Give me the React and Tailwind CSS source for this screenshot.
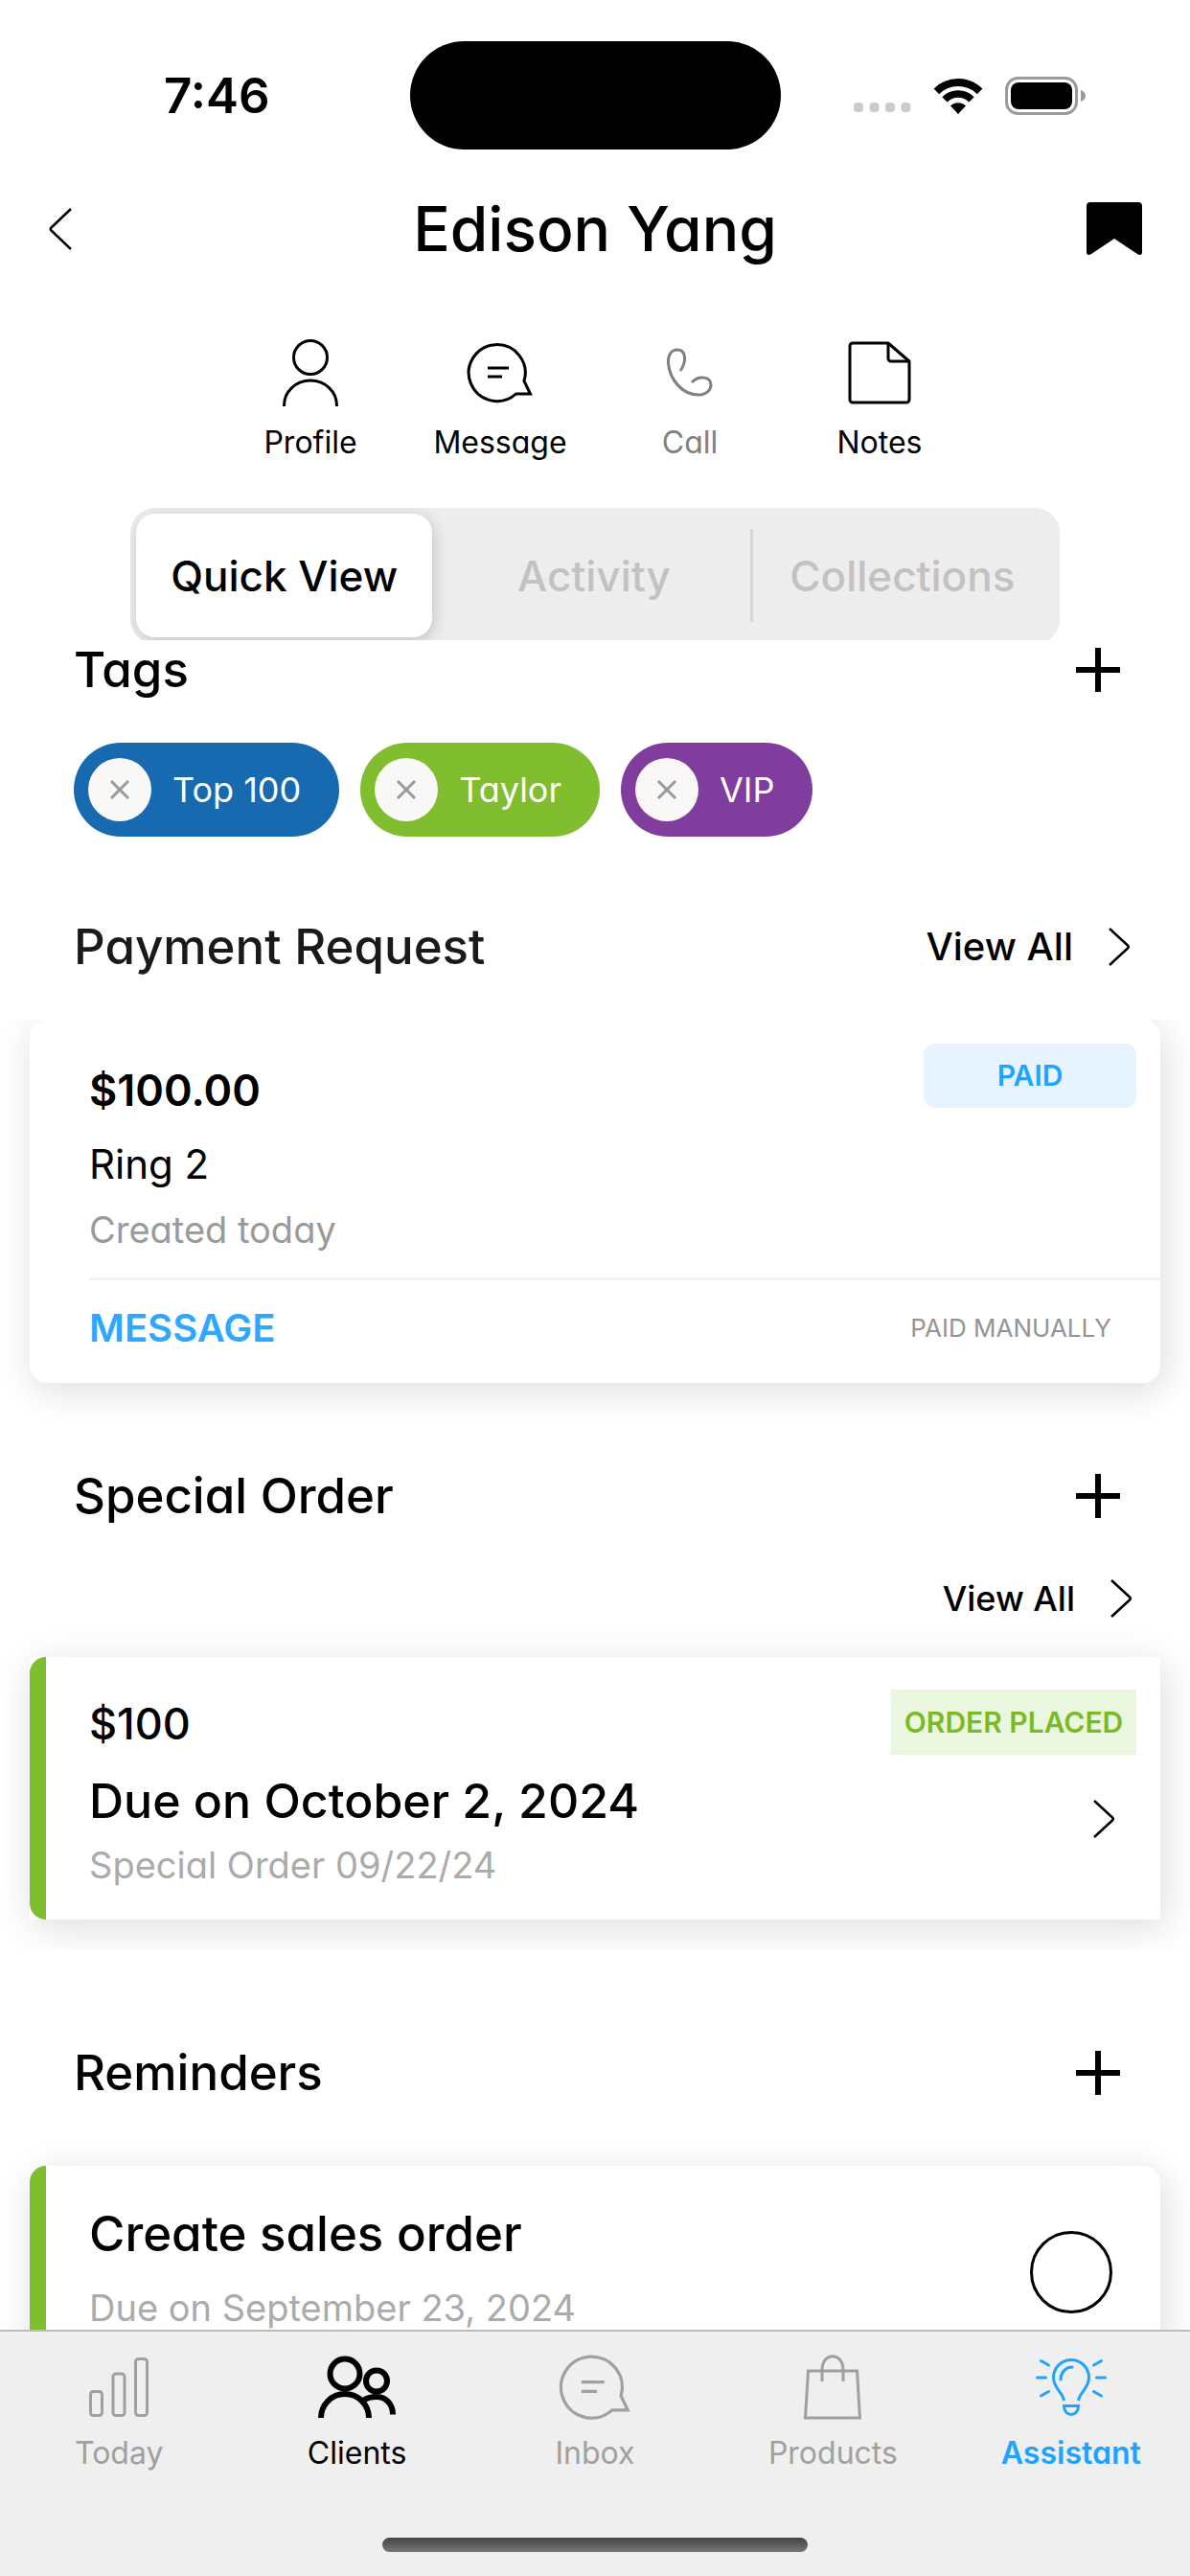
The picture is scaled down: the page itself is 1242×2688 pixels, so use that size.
import React, { useState } from 'react';
import clsx from 'clsx';

const TAGS = [
    { label: 'Top 100', color: 'bg-[#176ab0]' },
    { label: 'Taylor', color: 'bg-[#80be30]' },
    { label: 'VIP', color: 'bg-[#813d9d]' },
];

const VIEWS = ['Quick View', 'Activity', 'Collections'];

const WifiIcon = () => (
    <svg width="52" height="38" viewBox="0 0 52 38" fill="none" aria-hidden="true">
        <path d="M3.4 14.4a32 32 0 0 1 45.2 0" stroke="#000" strokeWidth="8" />
        <path d="M11.9 22.9a20 20 0 0 1 28.2 0" stroke="#000" strokeWidth="7.5" />
        <path d="M26 38l-8-8.500a11.500 11.500 0 0 1 16 0z" fill="#000" />
    </svg>
);

const BatteryIcon = () => (
    <svg width="84" height="40" viewBox="0 0 84 40" fill="none" aria-hidden="true">
        <rect x="1.500" y="1.500" width="73" height="37" rx="12" stroke="#9a9a9a" strokeWidth="3" />
        <rect x="6" y="6" width="64" height="28" rx="8" fill="#000" />
        <path d="M79 14c3 1 5 3 5 6s-2 5-5 6z" fill="#9a9a9a" />
    </svg>
);

const SignalDots = () => (
    <svg width="60" height="10" viewBox="0 0 60 10" fill="#cacaca" aria-hidden="true">
        <rect x="0" width="10" height="10" rx="4" />
        <rect x="16.500" width="10" height="10" rx="4" />
        <rect x="33" width="10" height="10" rx="4" />
        <rect x="49.500" width="10" height="10" rx="4" />
    </svg>
);

const BackIcon = () => (
    <svg width="26" height="46" viewBox="0 0 26 46" fill="none" stroke="#000" strokeWidth="2.500" aria-hidden="true">
        <path d="M24 2L3.500 21.500q-1.500 1.500 0 3L24 44" />
    </svg>
);

const BookmarkIcon = () => (
    <svg width="58" height="56" viewBox="0 0 58 56" aria-hidden="true">
        <path d="M4 0h50a4 4 0 0 1 4 4v48c0 3-2 4-5 2L29 38 5 54c-3 2-5 1-5-2V4a4 4 0 0 1 4-4z" />
    </svg>
);

const ChevronIcon = () => (
    <svg width="24" height="42" viewBox="0 0 24 42" fill="none" stroke="#000" strokeWidth="2.500" aria-hidden="true">
        <path d="M2 2l19 17.500q1.500 1.500 0 3L2 40" />
    </svg>
);

const PlusIcon = () => (
    <svg width="46" height="46" viewBox="0 0 46 46" stroke="#000" strokeWidth="6" aria-hidden="true">
        <path d="M23 0v46M0 23h46" />
    </svg>
);

const CloseIcon = () => (
    <svg width="20" height="20" viewBox="0 0 20 20" stroke="#9a9a9a" strokeWidth="3" aria-hidden="true">
        <path d="M1 1l18 18M19 1L1 19" />
    </svg>
);

const ProfileIcon = () => (
    <svg width="60" height="72" viewBox="0 0 60 72" fill="none" stroke="currentColor" strokeWidth="3" aria-hidden="true">
        <circle cx="30" cy="20" r="17.500" />
        <path d="M2.500 71v-1a27.500 26 0 0 1 55 0v1" />
    </svg>
);

const ChatIcon = ({ size = 70 }) => (
    <svg width={size} height={size} viewBox="0 0 70 70" fill="none" stroke="currentColor" strokeWidth="3" aria-hidden="true">
        <path d="M51.500 57a29.500 29.500 0 1 1 8.500-13.500L66.500 57z" />
        <path d="M22 30h22M22 39h15" />
    </svg>
);

const CallIcon = () => (
    <svg width="52" height="54" viewBox="0 0 52 54" fill="none" stroke="currentColor" strokeWidth="3" aria-hidden="true">
        <path d="M16 25C23 15 22 3 13 3 6 3 3 9 3.500 17 5 34 18 50 35 50c9 0 13-6 13-10 0-9-12-11-20-3" />
    </svg>
);

const NotesIcon = () => (
    <svg width="66" height="66" viewBox="0 0 66 66" fill="none" stroke="currentColor" strokeWidth="3" strokeLinejoin="round" aria-hidden="true">
        <path d="M5 2h37l22 19v40a3 3 0 0 1-3 3H5a3 3 0 0 1-3-3V5a3 3 0 0 1 3-3z" />
        <path d="M42 2v16a3 3 0 0 0 3 3h19" />
    </svg>
);

const TodayIcon = () => (
    <svg width="62" height="62" viewBox="0 0 62 62" fill="none" stroke="currentColor" strokeWidth="3" aria-hidden="true">
        <rect x="1.500" y="35.500" width="12" height="25" rx="3" />
        <rect x="25" y="17" width="12" height="43.500" rx="3" />
        <rect x="48.500" y="1.500" width="12" height="59" rx="3" />
    </svg>
);

const ClientsIcon = () => (
    <svg width="82" height="66" viewBox="0 0 82 66" fill="none" stroke="currentColor" strokeWidth="6" aria-hidden="true">
        <circle cx="28" cy="19" r="15.500" />
        <circle cx="61" cy="26.500" r="11" />
        <path d="M3 65a25 25 0 0 1 50 0" />
        <path d="M47 47c4-3 9-4 14-4 10 0 17 8 17 18.500" />
    </svg>
);

const BagIcon = () => (
    <svg width="60" height="68" viewBox="0 0 60 68" fill="none" stroke="currentColor" strokeWidth="3" aria-hidden="true">
        <path d="M4.500 17h51l3 49h-57z" />
        <path d="M19 28V16c0-19 22-19 22 0v12" />
    </svg>
);

const BulbIcon = () => (
    <svg width="74" height="60" viewBox="0 0 74 60" fill="none" stroke="currentColor" strokeWidth="3" aria-hidden="true">
        <path d="M29.500 44c-1-8-11-13-11-24a18.500 18.500 0 0 1 37 0c0 11-10 16-11 24" />
        <path d="M29.500 49.500h15c0 12-15 12-15 0z" />
        <path d="M26 22c0-7 5-13 12-13M1.500 20h9M63.500 20h9M5.500 2.500l8 4.500M68.500 2.500l-8 4.500M5.500 39l8-4.500M68.500 39l-8-4.500" strokeLinecap="round" />
    </svg>
);

const ACTIONS = [
    { label: 'Profile', icon: <ProfileIcon /> },
    { label: 'Message', icon: <ChatIcon /> },
    { label: 'Call', icon: <CallIcon />, disabled: true },
    { label: 'Notes', icon: <NotesIcon /> },
];

const TABS = [
    { label: 'Today', icon: <TodayIcon />, style: 'text-[#a0a0a0]' },
    { label: 'Clients', icon: <ClientsIcon />, style: 'text-black' },
    { label: 'Inbox', icon: <ChatIcon size={76} />, style: 'text-[#a0a0a0]' },
    { label: 'Products', icon: <BagIcon />, style: 'text-[#a0a0a0]' },
    { label: 'Assistant', icon: <BulbIcon />, style: "text-[#1ea4ff] font-semibold [font-feature-settings:'cv11']" },
];

const SectionHeader = ({ title, children, className }) => (
    <div className={clsx('flex items-center justify-between pl-[77px]', className)}>
        <h2 className="text-[51px] leading-[62px] font-medium">{title}</h2>
        {children}
    </div>
);

const ViewAll = ({ className }) => (
    <a href="#" className={clsx('flex items-center gap-9 font-medium leading-[50px]', className)}>
        View All
        <ChevronIcon />
    </a>
);

const AddButton = ({ label }) => (
    <button type="button" aria-label={label}>
        <PlusIcon />
    </button>
);

export default function App() {
    const [view, setView] = useState('Quick View');

    return (
        <div className="flex h-screen flex-col overflow-hidden bg-white font-['Inter',sans-serif] text-black">
            {/* Status bar */}
            <div className="grid shrink-0 grid-cols-[1fr_auto_1fr] items-center pt-[43px]">
                <span className="pl-[171px] text-[51px] leading-[60px] font-semibold">7:46</span>
                <div className="h-[113px] w-[387px] rounded-full bg-black" />
                <div className="flex items-center justify-end gap-[23px] pr-[109px]">
                    <div className="pt-6">
                        <SignalDots />
                    </div>
                    <WifiIcon />
                    <BatteryIcon />
                </div>
            </div>

            <div className="flex min-h-0 flex-1 flex-col [font-feature-settings:'cv11']">
                <header className="grid h-[166px] shrink-0 grid-cols-[1fr_auto_1fr] items-center px-[50px]">
                    <button type="button" aria-label="Back" className="justify-self-start">
                        <BackIcon />
                    </button>
                    <h1 className="text-[64px] leading-[80px] font-medium">Edison Yang</h1>
                    <button type="button" aria-label="Bookmark" className="justify-self-end">
                        <BookmarkIcon />
                    </button>
                </header>

                <nav className="flex shrink-0 justify-center pt-[31px]">
                    {ACTIONS.map(({ label, icon, disabled }) => (
                        <button
                            key={label}
                            type="button"
                            disabled={disabled}
                            className="flex w-[198px] flex-col items-center gap-[17px] text-[32px] leading-[40px] disabled:text-[#808080]"
                        >
                            <span className="flex h-[72px] items-center">{icon}</span>
                            {label}
                        </button>
                    ))}
                </nav>

                <div className="mx-[136px] mt-12 h-[138px] shrink-0 overflow-hidden">
                    <div className="grid h-[142px] grid-cols-3 overflow-hidden rounded-[26px] bg-[#ededed]">
                        {VIEWS.map((name, i) => (
                            <div key={name} className="flex items-center pt-[6px] pr-2 pb-[7px] pl-[6px]">
                                {i === 2 && <span className="-ml-[6px] h-[97px] w-[3px] bg-[#d6d6d6]" />}
                                <button
                                    type="button"
                                    onClick={() => setView(name)}
                                    className={clsx(
                                        'h-full flex-1 rounded-[20px] text-[44px] font-medium',
                                        view === name ? 'bg-white text-black shadow-[2px_4px_16px_rgba(0,0,0,0.18)]' : 'text-[#c2c2c2]'
                                    )}
                                >
                                    {name}
                                </button>
                            </div>
                        ))}
                    </div>
                </div>

                <main className="min-h-0 flex-1 overflow-hidden">
                    <SectionHeader title="Tags" className="pr-[73px]">
                        <AddButton label="Add tag" />
                    </SectionHeader>
                    <ul className="mt-[45px] flex gap-[22px] pl-[77px]">
                        {TAGS.map(({ label, color }) => (
                            <li key={label} className={clsx('flex h-[98px] items-center gap-[22px] rounded-full pr-10 pl-[15px] text-[36px] text-white', color)}>
                                <button type="button" aria-label={`Remove ${label}`} className="flex size-[66px] items-center justify-center rounded-full bg-[#f9f8f6]">
                                    <CloseIcon />
                                </button>
                                {label}
                            </li>
                        ))}
                    </ul>

                    <SectionHeader title="Payment Request" className="mt-[84px] pr-[62px] text-[#1a1a1a]">
                        <ViewAll className="text-[40px] text-black" />
                    </SectionHeader>
                    <div className="mt-[45px] overflow-hidden px-[31px] pb-[45px]">
                        <article className="rounded-[18px] bg-white shadow-[4px_8px_40px_rgba(0,0,0,0.14)]">
                            <div className="flex items-start justify-between pl-[62px]">
                                <div className="pt-10 pb-[25px]">
                                    <p className="text-[45px] leading-[68px] font-semibold">$100.00</p>
                                    <p className="text-[42px] leading-[86px]">Ring 2</p>
                                    <p className="text-[38px] leading-[50px] text-[#9a9a9a]">Created today</p>
                                </div>
                                <span className="mt-[25px] mr-[25px] w-[222px] rounded-xl bg-[#e7f3ff] text-center text-[30px] leading-[67px] font-semibold text-[#1ea4ff]">
                                    PAID
                                </span>
                            </div>
                            <div className="ml-[62px] flex h-[110px] items-center justify-between border-t-[3px] border-[#f2f2f2] pr-[51px] pb-2">
                                <button type="button" className="text-[40px] font-semibold text-[#2ea8ff]">MESSAGE</button>
                                <span className="text-[26px] text-[#949494]">PAID MANUALLY</span>
                            </div>
                        </article>
                    </div>

                    <SectionHeader title="Special Order" className="mt-[42px] pr-[73px]">
                        <AddButton label="Add special order" />
                    </SectionHeader>
                    <div className="mt-[51px] flex justify-end pr-[60px]">
                        <ViewAll className="text-[36px]" />
                    </div>
                    <div className="overflow-hidden px-[31px] pt-9 pb-[33px]">
                        <article className="flex bg-white shadow-[4px_8px_40px_rgba(0,0,0,0.14)]">
                            <span className="w-[17px] rounded-l-[17px] bg-[#80be30]" />
                            <div className="flex-1 py-9 pl-[45px]">
                                <p className="text-[45px] leading-[68px] font-medium">$100</p>
                                <p className="text-[50px] leading-[92px] font-medium">Due on October 2, 2024</p>
                                <p className="text-[38px] leading-[42px] text-[#ababab]">Special Order 09/22/24</p>
                            </div>
                            <div className="flex flex-col items-end gap-[46px] pt-[34px] pr-[25px]">
                                <span className="w-[256px] bg-[#eaf6de] text-center text-[30px] leading-[68px] font-semibold text-[#7aba23]">
                                    ORDER PLACED
                                </span>
                                <a href="#" aria-label="Open order" className="mr-[22px]">
                                    <ChevronIcon />
                                </a>
                            </div>
                        </article>
                    </div>

                    <SectionHeader title="Reminders" className="mt-24 pr-[73px]">
                        <AddButton label="Add reminder" />
                    </SectionHeader>
                    <article className="mx-[31px] mt-[66px] flex items-start rounded-[18px] bg-white pr-[50px] shadow-[4px_8px_40px_rgba(0,0,0,0.14)]">
                        <span className="w-[17px] self-stretch rounded-l-[17px] bg-[#80be30]" />
                        <label htmlFor="reminder" className="flex-1 pt-[37px] pb-9 pl-[45px]">
                            <span className="block text-[51px] leading-[68px] font-medium">Create sales order</span>
                            <span className="block text-[38px] leading-[86px] text-[#ababab]">Due on September 23, 2024</span>
                        </label>
                        <input
                            id="reminder"
                            type="checkbox"
                            className="mt-[68px] size-[86px] appearance-none rounded-full border-[3px] border-black checked:bg-[#80be30]"
                        />
                    </article>
                </main>
            </div>

            {/* Bottom tab bar */}
            <footer className="shrink-0 border-t-2 border-[#bcbcbc] bg-[#efefef] pt-[22px] pb-[25px]">
                <nav className="grid grid-cols-5">
                    {TABS.map(({ label, icon, style }) => (
                        <a key={label} href="#" className={clsx('flex flex-col items-center gap-[15px] text-[32px] leading-[36px]', style)}>
                            <span className="flex h-[72px] items-center">{icon}</span>
                            {label}
                        </a>
                    ))}
                </nav>
                <div className="mx-auto mt-[70px] h-[15px] w-[444px] rounded-full bg-linear-to-b from-[#444444] to-[#777777]" />
            </footer>
        </div>
    );
}
